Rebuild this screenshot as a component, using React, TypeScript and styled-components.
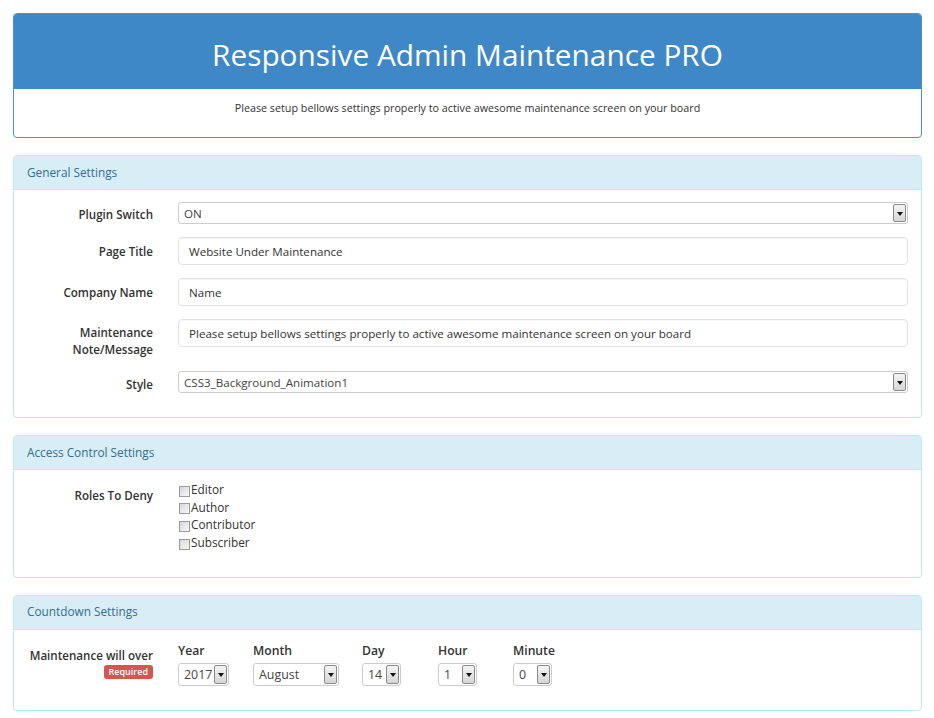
import React from "react";
import styled, { createGlobalStyle } from "styled-components";

const Global = createGlobalStyle`
  html, body { margin: 0; padding: 0; background: #fff; }
  body { font-family: "Open Sans", "Liberation Sans", sans-serif; color: #333; }
  * { box-sizing: border-box; }
`;

const Page = styled.div`
  padding: 13px 12px 13px 13px;
  display: flex;
  flex-direction: column;
  gap: 17px;
  width: 934px;
`;

const TitlePanel = styled.div`
  border: 1px solid #4f8fcc;
  border-radius: 4px;
  overflow: hidden;
`;

const TitleBar = styled.div`
  background: #3f88c8;
  height: 75px;
  display: flex;
  align-items: center;
  justify-content: center;
  padding-top: 5px;
`;

const Title = styled.h1`
  margin: 0;
  font-weight: 400;
  font-size: 29.8px;
  color: #fff;
`;

const Subtitle = styled.div`
  height: 48px;
  display: flex;
  justify-content: center;
  padding-top: 11px;
  font-size: 10.75px;
  line-height: 16px;
  color: #333;
`;

const Panel = styled.section`
  border: 1px solid #bce8f1;
  border-radius: 4px;
  overflow: hidden;
`;

const PanelHead = styled.div`
  background: #d9edf7;
  border-bottom: 1px solid #bce8f1;
  height: 34px;
  display: flex;
  align-items: center;
  padding: 0 0 2px 13px;
  font-size: 11.8px;
  color: #31708f;
`;

const PanelBody = styled.div<{ $top?: number; $bottom?: number }>`
  padding: ${(p) => p.$top ?? 12}px 13px ${(p) => p.$bottom ?? 24}px 0;
  display: flex;
  flex-direction: column;
  gap: 13px;
`;

const Row = styled.div`
  display: grid;
  grid-template-columns: 139px 1fr;
  column-gap: 25px;
  align-items: start;
`;

const Label = styled.div<{ $top?: number }>`
  text-align: right;
  font-weight: 600;
  font-size: 11.6px;
  line-height: 17px;
  padding-top: ${(p) => p.$top ?? 5}px;
  color: #333;
`;

const TextInput = styled.div`
  height: 28px;
  border: 1px solid #e2e2e2;
  border-radius: 4px;
  box-shadow: inset 0 1px 1px rgba(0, 0, 0, 0.04);
  padding-left: 10px;
  display: flex;
  align-items: center;
  font-size: 11.6px;
  color: #333;
`;

const SelectBox = styled.div<{ $w?: number; $h?: number }>`
  width: ${(p) => (p.$w ? `${p.$w}px` : "100%")};
  height: ${(p) => p.$h ?? 22}px;
  border: 1px solid #ccc;
  border-radius: 3px;
  background: #fff;
  display: flex;
  align-items: center;
  justify-content: space-between;
  padding: 0 0 0 5px;
  font-size: 11.6px;
  color: #444;
`;

const SmallSelectText = styled.span`
  font-size: 12.4px;
  color: #444;
`;

const ArrowBtn = styled.span`
  width: 13px;
  height: calc(100% - 2px);
  margin-right: 1px;
  border: 1px solid #8a8a8a;
  border-radius: 2px;
  background: linear-gradient(#f4f4f4, #d6d6d6);
  display: flex;
  align-items: center;
  justify-content: center;
  flex: none;
  &::after {
    content: "";
    border-left: 3px solid transparent;
    border-right: 3px solid transparent;
    border-top: 4px solid #111;
    margin-top: 1px;
  }
`;

const CheckList = styled.div`
  display: flex;
  flex-direction: column;
`;

const CheckItem = styled.label`
  display: flex;
  align-items: flex-end;
  font-size: 11.8px;
  line-height: 17.7px;
  color: #333;
`;

const Box = styled.span`
  width: 11px;
  height: 11px;
  margin: 0 1px 2px 1px;
  border: 1px solid #9a9a9a;
  background: linear-gradient(135deg, #d8d8d8, #f7f7f7);
  flex: none;
`;

const DateRow = styled.div`
  display: flex;
`;

const DateCol = styled.div<{ $w?: number }>`
  width: ${(p) => (p.$w ? `${p.$w}px` : "auto")};
  display: flex;
  flex-direction: column;
  gap: 3px;
`;

const ColLabel = styled.div`
  font-size: 12.2px;
  font-weight: 600;
  line-height: 18px;
  color: #333;
`;

const LabelStack = styled.div`
  display: flex;
  flex-direction: column;
  align-items: flex-end;
  padding-top: 5px;
  gap: 1px;
`;

const LabelText = styled.div`
  font-weight: 600;
  font-size: 11.6px;
  line-height: 17px;
`;

const Badge = styled.span`
  display: block;
  background: #d9534f;
  color: #fff;
  font-size: 9px;
  font-weight: 600;
  line-height: 14px;
  height: 14px;
  padding: 0 5px;
  border-radius: 3px;
`;

const Select = ({ value, w, h, small }: { value: string; w?: number; h?: number; small?: boolean }) => (
  <SelectBox $w={w} $h={h}>
    {small ? <SmallSelectText>{value}</SmallSelectText> : <span>{value}</span>}
    <ArrowBtn />
  </SelectBox>
);

export default function App() {
  return (
    <>
      <Global />
      <Page>
        <TitlePanel>
          <TitleBar>
            <Title>Responsive Admin Maintenance PRO</Title>
          </TitleBar>
          <Subtitle>Please setup bellows settings properly to active awesome maintenance screen on your board</Subtitle>
        </TitlePanel>

        <Panel>
          <PanelHead>General Settings</PanelHead>
          <PanelBody>
            <Row>
              <Label $top={4}>Plugin Switch</Label>
              <Select value="ON" />
            </Row>
            <Row>
              <Label $top={6}>Page Title</Label>
              <TextInput>Website Under Maintenance</TextInput>
            </Row>
            <Row>
              <Label $top={6}>Company Name</Label>
              <TextInput>Name</TextInput>
            </Row>
            <Row>
              <Label $top={5}>
                Maintenance
                <br />
                Note/Message
              </Label>
              <TextInput>Please setup bellows settings properly to active awesome maintenance screen on your board</TextInput>
            </Row>
            <Row>
              <Label $top={5}>Style</Label>
              <Select value="CSS3_Background_Animation1" />
            </Row>
          </PanelBody>
        </Panel>

        <Panel>
          <PanelHead>Access Control Settings</PanelHead>
          <PanelBody $top={11} $bottom={25}>
            <Row>
              <Label $top={6}>Roles To Deny</Label>
              <CheckList>
                {["Editor", "Author", "Contributor", "Subscriber"].map((r) => (
                  <CheckItem key={r}>
                    <Box />
                    {r}
                  </CheckItem>
                ))}
              </CheckList>
            </Row>
          </PanelBody>
        </Panel>

        <Panel>
          <PanelHead>Countdown Settings</PanelHead>
          <PanelBody $top={12}>
            <Row>
              <LabelStack>
                <LabelText>Maintenance will over</LabelText>
                <Badge>Required</Badge>
              </LabelStack>
              <DateRow>
                <DateCol $w={75}>
                  <ColLabel>Year</ColLabel>
                  <Select value="2017" w={51} h={23} small />
                </DateCol>
                <DateCol $w={109}>
                  <ColLabel>Month</ColLabel>
                  <Select value="August" w={86} h={23} small />
                </DateCol>
                <DateCol $w={76}>
                  <ColLabel>Day</ColLabel>
                  <Select value="14" w={39} h={23} small />
                </DateCol>
                <DateCol $w={75}>
                  <ColLabel>Hour</ColLabel>
                  <Select value="1" w={39} h={23} small />
                </DateCol>
                <DateCol>
                  <ColLabel>Minute</ColLabel>
                  <Select value="0" w={39} h={23} small />
                </DateCol>
              </DateRow>
            </Row>
          </PanelBody>
        </Panel>
      </Page>
    </>
  );
}
